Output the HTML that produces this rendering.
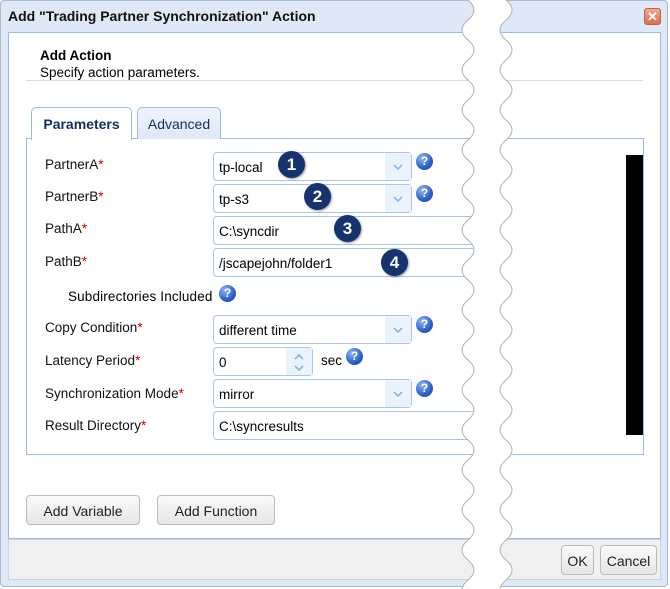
<!DOCTYPE html>
<html><head><meta charset="utf-8"><style>
*{box-sizing:border-box}
body{margin:0;width:670px;height:589px;overflow:hidden;background:#fff;font-family:"Liberation Sans",Arial,sans-serif;font-size:13px;color:#000;position:relative}
.abs{position:absolute}
.win{left:0;top:0;width:668px;height:587px;border:1px solid #a9b9cf;background:#dfe8f6;border-radius:4px}
.title{left:8px;top:8px;font-weight:bold;font-size:14px;color:#111}
.body{left:8px;top:32px;width:653px;height:507px;background:#fff;border:1px solid #99bbe8}
.foot{left:8px;top:539px;width:653px;height:41px;background:#f0f0f0;border:1px solid #c8d4e4;border-top:1px solid #d0d0d0}
.tab{height:32px;border:1px solid #99bbe8;border-bottom:none;border-radius:5px 5px 0 0;background:linear-gradient(#eef4fc,#dde8f7);font-size:14px;padding-top:8px;text-align:center}
.panel{left:26px;top:138px;width:618px;height:317px;border:1px solid #99bbe8;background:#fff}
.lbl{left:45px;font-size:13.5px;color:#111}
.lbl b{color:#c00;font-weight:normal}
.fld{left:213px;height:29px;border:1px solid #a8c4e6;border-radius:4px;background:#fff;font-size:13.5px;padding:7px 0 0 5px}
.dd{position:absolute;right:0;top:0;width:26px;height:27px;background:#eaf2fc}
.dd svg{position:absolute;left:8px;top:11px}
.help{width:17px;height:17px;border-radius:50%;background:radial-gradient(circle at 35% 30%,#8fb6f3,#2a5fc8 60%,#1a3f9a);color:#fff;font-weight:bold;font-size:12px;text-align:center;line-height:17px}
.num{width:27px;height:27px;border-radius:50%;background:#16336f;color:#fff;font-weight:bold;font-size:17px;text-align:center;line-height:27px;box-shadow:1px 1px 2px rgba(0,0,0,.4)}
.btn{height:30px;border:1px solid #bbb;border-radius:4px;background:linear-gradient(#fafafa,#e6e6e6);font-size:14px;text-align:center;padding-top:7px;color:#222}
</style></head><body>
<div class="abs win"></div>
<div class="abs title">Add "Trading Partner Synchronization" Action</div>
<div class="abs" style="left:644px;top:8px;width:17px;height:17px;border-radius:3px;background:linear-gradient(#f0a88c,#d9704e);border:1px solid #c06040;color:#fff;font-weight:bold;font-size:13px;text-align:center;line-height:15px">✕</div>
<div class="abs body"></div>
<div class="abs" style="left:40px;top:48px;font-weight:bold;font-size:13.5px">Add Action</div>
<div class="abs" style="left:40px;top:65px;font-size:13.5px">Specify action parameters.</div>
<div class="abs" style="left:26px;top:80px;width:617px;height:1px;background:#ddd"></div>
<div class="abs panel"></div>
<div class="abs tab" style="left:31px;top:107px;width:101px;height:33px;background:#fff;font-weight:bold;color:#15305e">Parameters</div>
<div class="abs tab" style="left:137px;top:107px;width:84px;color:#15305e">Advanced</div>
<div class="abs" style="left:626px;top:155px;width:17px;height:280px;background:#000"></div>

<div class="abs lbl" style="top:157px">PartnerA<b>*</b></div>
<div class="abs lbl" style="top:189px">PartnerB<b>*</b></div>
<div class="abs lbl" style="top:221px">PathA<b>*</b></div>
<div class="abs lbl" style="top:254px">PathB<b>*</b></div>
<div class="abs" style="left:68px;top:289px;font-size:13.5px;letter-spacing:0.15px">Subdirectories Included</div>
<div class="abs help" style="left:219px;top:285px">?</div>
<div class="abs lbl" style="top:320px">Copy Condition<b>*</b></div>
<div class="abs lbl" style="top:353px">Latency Period<b>*</b></div>
<div class="abs lbl" style="top:386px">Synchronization Mode<b>*</b></div>
<div class="abs lbl" style="top:418px">Result Directory<b>*</b></div>

<div class="abs fld" style="top:152px;width:199px">tp-local<div class="dd"><svg width="10" height="6"><path d="M1,1 L5,5 L9,1" fill="none" stroke="#7fb0e0" stroke-width="1.5"/></svg></div></div>
<div class="abs help" style="left:416px;top:153px">?</div>
<div class="abs fld" style="top:184px;width:199px">tp-s3<div class="dd"><svg width="10" height="6"><path d="M1,1 L5,5 L9,1" fill="none" stroke="#7fb0e0" stroke-width="1.5"/></svg></div></div>
<div class="abs help" style="left:416px;top:185px">?</div>
<div class="abs fld" style="top:216px;width:280px">C:\syncdir</div>
<div class="abs fld" style="top:248px;width:280px">/jscapejohn/folder1</div>
<div class="abs fld" style="top:315px;width:199px">different time<div class="dd"><svg width="10" height="6"><path d="M1,1 L5,5 L9,1" fill="none" stroke="#7fb0e0" stroke-width="1.5"/></svg></div></div>
<div class="abs help" style="left:416px;top:316px">?</div>
<div class="abs fld" style="top:347px;width:100px">0<div class="dd"><svg width="10" height="6" style="top:6px"><path d="M1,5 L5,1 L9,5" fill="none" stroke="#7fb0e0" stroke-width="1.5"/></svg><svg width="10" height="6" style="top:17px"><path d="M1,1 L5,5 L9,1" fill="none" stroke="#7fb0e0" stroke-width="1.5"/></svg></div></div>
<div class="abs" style="left:321px;top:353px;font-size:13.5px">sec</div>
<div class="abs help" style="left:346px;top:348px">?</div>
<div class="abs fld" style="top:379px;width:199px">mirror<div class="dd"><svg width="10" height="6"><path d="M1,1 L5,5 L9,1" fill="none" stroke="#7fb0e0" stroke-width="1.5"/></svg></div></div>
<div class="abs help" style="left:416px;top:380px">?</div>
<div class="abs fld" style="top:411px;width:280px">C:\syncresults</div>

<div class="abs num" style="left:278px;top:151px">1</div>
<div class="abs num" style="left:304px;top:183px">2</div>
<div class="abs num" style="left:334px;top:215px">3</div>
<div class="abs num" style="left:381px;top:249px">4</div>

<div class="abs btn" style="left:26px;top:495px;width:114px">Add Variable</div>
<div class="abs btn" style="left:157px;top:495px;width:118px">Add Function</div>
<div class="abs foot"></div>
<div class="abs btn" style="left:561px;top:545px;width:33px">OK</div>
<div class="abs btn" style="left:600px;top:545px;width:57px">Cancel</div>

<svg class="abs" style="left:0;top:0" width="670" height="589">
<path fill="#fff" stroke="#b0b0b0" stroke-width="1" d="M468,-20 Q456,-10 468,0 T468,20 T468,40 T468,60 T468,80 T468,100 T468,120 T468,140 T468,160 T468,180 T468,200 T468,220 T468,240 T468,260 T468,280 T468,300 T468,320 T468,340 T468,360 T468,380 T468,400 T468,420 T468,440 T468,460 T468,480 T468,500 T468,520 T468,540 T468,560 T468,580 T468,600 L506,600 Q494,590 506,580 T506,560 T506,540 T506,520 T506,500 T506,480 T506,460 T506,440 T506,420 T506,400 T506,380 T506,360 T506,340 T506,320 T506,300 T506,280 T506,260 T506,240 T506,220 T506,200 T506,180 T506,160 T506,140 T506,120 T506,100 T506,80 T506,60 T506,40 T506,20 T506,0 T506,-20 Z"/>
</svg>
</body></html>
